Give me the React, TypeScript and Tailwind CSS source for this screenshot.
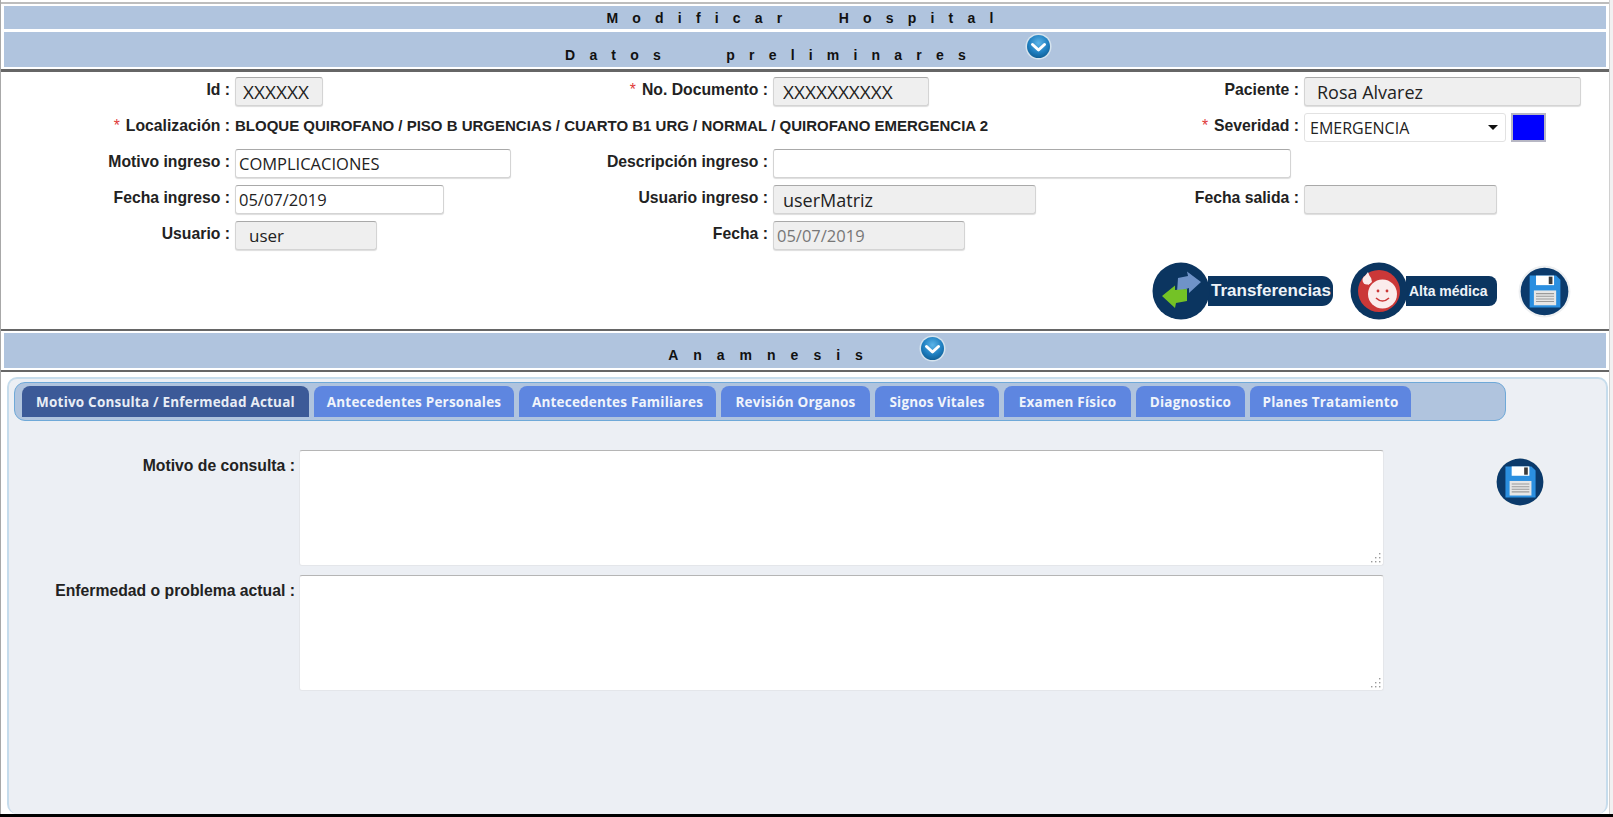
import React from "react";

const SANS = "font-['Liberation_Sans',Arial,sans-serif]";

function Chevron() {
  return (
    <svg width="27" height="27" viewBox="0 0 27 27" className="shrink-0">
      <defs>
        <radialGradient id="chev" cx="50%" cy="35%" r="70%">
          <stop offset="0%" stopColor="#5cb4e8" />
          <stop offset="60%" stopColor="#1f7fc0" />
          <stop offset="100%" stopColor="#0e5a8f" />
        </radialGradient>
      </defs>
      <circle cx="13.5" cy="13.5" r="13" fill="#d5e3ee" />
      <circle cx="13.5" cy="13.5" r="11.5" fill="url(#chev)" />
      <path d="M7.5 11.5 L13.5 17 L19.5 11.5" fill="none" stroke="#fff" strokeWidth="3" strokeLinecap="round" strokeLinejoin="round" />
    </svg>
  );
}

function Disk({ size }: { size: number }) {
  return (
    <svg width={size} height={size} viewBox="0 0 50 50" className="shrink-0">
      <circle cx="25" cy="25" r="24.5" fill="#eef0f2" />
      <circle cx="25" cy="25" r="22.5" fill="#0b3a6b" />
      <path d="M11 10 H36 L40 14 V40 H11 Z" fill="#2b8fe0" />
      <rect x="17" y="10" width="17" height="9" fill="#ffffff" />
      <rect x="29" y="11" width="3.5" height="7" fill="#3a3a3a" />
      <rect x="15" y="24" width="21" height="14" fill="#e6e6e6" />
      <path d="M17 27H34M17 29.5H34M17 32H34M17 34.5H34" stroke="#9a9a9a" strokeWidth="1" />
    </svg>
  );
}

function Label({ text, required }: { text: string; required?: boolean }) {
  return (
    <span className={`${SANS} text-[15.75px] font-bold text-[#222] whitespace-nowrap leading-[22px]`}>
      {required && <span className="text-[#e03a3a] mr-[6px] font-normal">*</span>}
      {text} :
    </span>
  );
}

type InputProps = { value?: string; w: string; gray?: boolean; size?: string; muted?: boolean; pad?: string };

function Box({ value = "", w, gray, size = "text-[16.5px]", muted, pad = "pl-[3px]" }: InputProps) {
  return (
    <input
      readOnly
      value={value}
      className={`${w} h-full ${pad} ${size} font-['Open_Sans',sans-serif] ${muted ? "text-[#777]" : "text-[#222]"} ${gray ? "bg-[#efefef]" : "bg-white"} border border-[#d4d4d4] border-t-[#a9a9a9] rounded-[3px] outline-none shadow-[0_1px_1px_#ddd]`}
    />
  );
}

function Field({ labelW, label, required, children, className = "" }: { labelW: string; label: string; required?: boolean; children: React.ReactNode; className?: string }) {
  return (
    <div className={`flex items-start h-full ${className}`}>
      <div className={`${labelW} shrink-0 flex justify-end pr-[5px] pt-[2px]`}>
        <Label text={label} required={required} />
      </div>
      {children}
    </div>
  );
}

const COL1 = "w-[234px]";
const COL2 = "w-[173px]";
const COL3 = "w-[154px]";

const ROW = "grid grid-cols-[599px_550px_1fr] h-[29px]";

function Band({ title, children, className, textClass }: { title: string; children?: React.ReactNode; className: string; textClass: string }) {
  return (
    <div className={`mx-[3px] bg-[#b0c4de] flex justify-center ${className}`}>
      <span className={`${SANS} text-[14px] font-bold text-[#111] whitespace-pre leading-none ${textClass}`}>{title}</span>
      {children}
    </div>
  );
}

const tabs = [
  ["Motivo Consulta / Enfermedad Actual", "w-[287px]"],
  ["Antecedentes Personales", "w-[200px]"],
  ["Antecedentes Familiares", "w-[197px]"],
  ["Revisión Organos", "w-[149px]"],
  ["Signos Vitales", "w-[124px]"],
  ["Examen Físico", "w-[127px]"],
  ["Diagnostico", "w-[109px]"],
  ["Planes Tratamiento", "w-[161px]"],
];

function Area({ label }: { label: string }) {
  return (
    <div className="flex items-start h-[116px]">
      <div className="w-[281px] shrink-0 flex justify-end pt-[5px]">
        <Label text={label} />
      </div>
      <div className="relative ml-[4px] w-[1085px] h-full">
        <textarea readOnly className="block w-full h-full bg-white border border-[#e4e6ea] border-t-[#b5b5b5] rounded-[3px] outline-none resize-none" />
        <svg width="11" height="11" viewBox="0 0 11 11" className="absolute right-[3px] bottom-[3px]">
          <g fill="#9a9a9a">
            <rect x="9" y="1" width="1.4" height="1.4" />
            <rect x="5" y="5" width="1.4" height="1.4" />
            <rect x="9" y="5" width="1.4" height="1.4" />
            <rect x="1" y="9" width="1.4" height="1.4" />
            <rect x="5" y="9" width="1.4" height="1.4" />
            <rect x="9" y="9" width="1.4" height="1.4" />
          </g>
        </svg>
      </div>
    </div>
  );
}

export default function App() {
  return (
    <div className="w-[1613px] h-[817px] bg-white flex flex-col overflow-hidden">
      <div className="flex-1 flex min-h-0">
        <div className="w-[1609px] border-l border-l-[#a8a8a8] flex flex-col pt-[2px]">
          <div className="h-[2px] bg-[#bdbdbd]" />
          <Band title={"Modificar   Hospital"} className="mt-[2px] h-[23px] pl-[4px] items-center" textClass="pt-[1px] tracking-[14.2px] [word-spacing:-4px]" />
          <Band title={"Datos   preliminares"} className="mt-[3px] h-[35px] pl-[7px] gap-[45px] items-start" textClass="pt-[16px] tracking-[14.2px] [word-spacing:-1px]">
            <div className="mt-[1px]"><Chevron /></div>
          </Band>
          <div className="mt-[2px] h-[3px] bg-[#666]" />

          <div className="h-[257px] flex flex-col pt-[5px] gap-[7px]">
            <div className={ROW}>
              <Field labelW={COL1} label="Id"><Box value="XXXXXX" w="w-[88px]" gray size="text-[19px]" pad="pl-[7px]" /></Field>
              <Field labelW={COL2} label="No. Documento" required><Box value="XXXXXXXXXX" w="w-[156px]" gray size="text-[19px]" pad="pl-[9px]" /></Field>
              <Field labelW={COL3} label="Paciente"><Box value="Rosa Alvarez" w="w-[277px]" gray size="text-[18px]" pad="pl-[12px]" /></Field>
            </div>
            <div className={ROW}>
              <div className="col-span-2 flex items-start pt-[2px]">
                <div className={`${COL1} shrink-0 flex justify-end pr-[5px]`}><Label text="Localización" required /></div>
                <span className={`${SANS} text-[15px] font-bold text-[#222] leading-[22px] whitespace-nowrap`}>BLOQUE QUIROFANO / PISO B URGENCIAS / CUARTO B1 URG / NORMAL / QUIROFANO EMERGENCIA 2</span>
              </div>
              <Field labelW={COL3} label="Severidad" required>
                <div className="w-[202px] h-full flex items-center justify-between pl-[5px] pr-[6px] bg-white border border-[#e2e2e2] rounded-[3px] font-['Open_Sans',sans-serif] text-[16px] text-[#222]">
                  EMERGENCIA
                  <svg width="12" height="7" viewBox="0 0 12 7"><path d="M1 1H11L6 6Z" fill="#111" /></svg>
                </div>
                <div className="ml-[5px] w-[35px] h-full bg-[#0000ff] border-2 border-[#b7b7c4]" />
              </Field>
            </div>
            <div className={ROW}>
              <Field labelW={COL1} label="Motivo ingreso"><Box value="COMPLICACIONES" w="w-[276px]" /></Field>
              <Field labelW={COL2} label="Descripción ingreso" className="col-span-2"><Box w="w-[518px]" /></Field>
            </div>
            <div className={ROW}>
              <Field labelW={COL1} label="Fecha ingreso"><Box value="05/07/2019" w="w-[209px]" /></Field>
              <Field labelW={COL2} label="Usuario ingreso"><Box value="userMatriz" w="w-[263px]" gray size="text-[18px]" pad="pl-[9px]" /></Field>
              <Field labelW={COL3} label="Fecha salida"><Box w="w-[193px]" gray /></Field>
            </div>
            <div className={ROW}>
              <Field labelW={COL1} label="Usuario"><Box value="user" w="w-[142px]" gray size="text-[17px]" pad="pl-[13px]" /></Field>
              <Field labelW={COL2} label="Fecha"><Box value="05/07/2019" w="w-[192px]" gray muted /></Field>
            </div>

            <div className="flex items-center justify-end pr-[38px] mt-[5px] h-[58px]">
              <div className="flex items-center">
                <svg width="58" height="58" viewBox="0 0 58 58" className="shrink-0 z-10">
                  <circle cx="29" cy="29" r="28.5" fill="#0b3560" />
                  <path d="M49 20 L35 9.5 L36 14 L26 16 L25 30 L37 26 L37 31 Z" fill="#6f93c8" />
                  <path d="M10 34 L23 23.5 L23 28 L35 27 L35 39 L24 41 L23 46 Z" fill="#74c226" />
                </svg>
                <div className="-ml-[2px] h-[30px] w-[125px] rounded-r-[11px] bg-[#0b3560] flex items-center pl-[3px]">
                  <span className={`${SANS} text-[17px] font-bold text-[#eef3f8] whitespace-nowrap`}>Transferencias</span>
                </div>
              </div>
              <div className="flex items-center ml-[17px]">
                <svg width="58" height="58" viewBox="0 0 58 58" className="shrink-0 z-10">
                  <circle cx="29" cy="29" r="28.5" fill="#0b3560" />
                  <circle cx="29" cy="29" r="21" fill="#cb3838" />
                  <circle cx="32.5" cy="32" r="14.5" fill="#fbecec" />
                  <circle cx="17" cy="18" r="4.5" fill="#fbecec" />
                  <path d="M15 14 L18 10 L22 20 L18 23 Z" fill="#fbecec" />
                  <circle cx="28" cy="29" r="1.4" fill="#cb3838" />
                  <circle cx="37" cy="29" r="1.4" fill="#cb3838" />
                  <path d="M26 36 Q32.5 42 39 36" fill="none" stroke="#cb3838" strokeWidth="1.6" />
                </svg>
                <div className="-ml-[2px] h-[30px] w-[91px] rounded-r-[8px] bg-[#0b3560] flex items-center pl-[3px]">
                  <span className={`${SANS} text-[14px] font-bold text-[#eef3f8] whitespace-nowrap`}>Alta médica</span>
                </div>
              </div>
              <div className="ml-[21px]"><Disk size={53} /></div>
            </div>
          </div>

          <div className="h-[2px] bg-[#666]" />
          <Band title="Anamnesis" className="mt-[2px] h-[35px] pl-[4px] gap-[41px] items-start" textClass="pt-[15px] tracking-[15px]">
            <div className="mt-[2px]"><Chevron /></div>
          </Band>
          <div className="mt-[2px] h-[2px] bg-[#666]" />

          <div className="flex-1 ml-[6px] mr-[1px] mt-[5px] bg-[#eceff4] border-2 border-[#c6dcec] border-b-0 rounded-[10px] pt-[3px] pl-[5px] flex flex-col">
            <div className="w-[1492px] h-[39px] flex items-end gap-[5px] pl-[7px] pb-[3px] bg-[#b0c4de] border border-[#6fa9d8] rounded-[11px]">
              {tabs.map(([t, w], i) => (
                <div
                  key={t}
                  className={`${w} h-[31px] pt-[1px] rounded-t-[8px] flex items-center justify-center font-['Open_Sans',sans-serif] text-[13.5px] font-bold tracking-[0.2px] whitespace-nowrap ${i === 0 ? "bg-[#3c5a98] text-[#e8edf5]" : "bg-[#5e86e0] text-[#f0f4fb]"}`}
                >
                  {t}
                </div>
              ))}
            </div>
            <div className="flex items-start mt-[29px]">
              <div className="flex flex-col gap-[9px]">
                <Area label="Motivo de consulta" />
                <Area label="Enfermedad o problema actual" />
              </div>
              <div className="ml-[110px] mt-[6px]"><Disk size={52} /></div>
            </div>
          </div>
        </div>
        <div className="flex-1 bg-[#f1f1f1] border-l border-l-[#d0d0d0]" />
      </div>
      <div className="h-[3px] bg-black shrink-0" />
    </div>
  );
}
